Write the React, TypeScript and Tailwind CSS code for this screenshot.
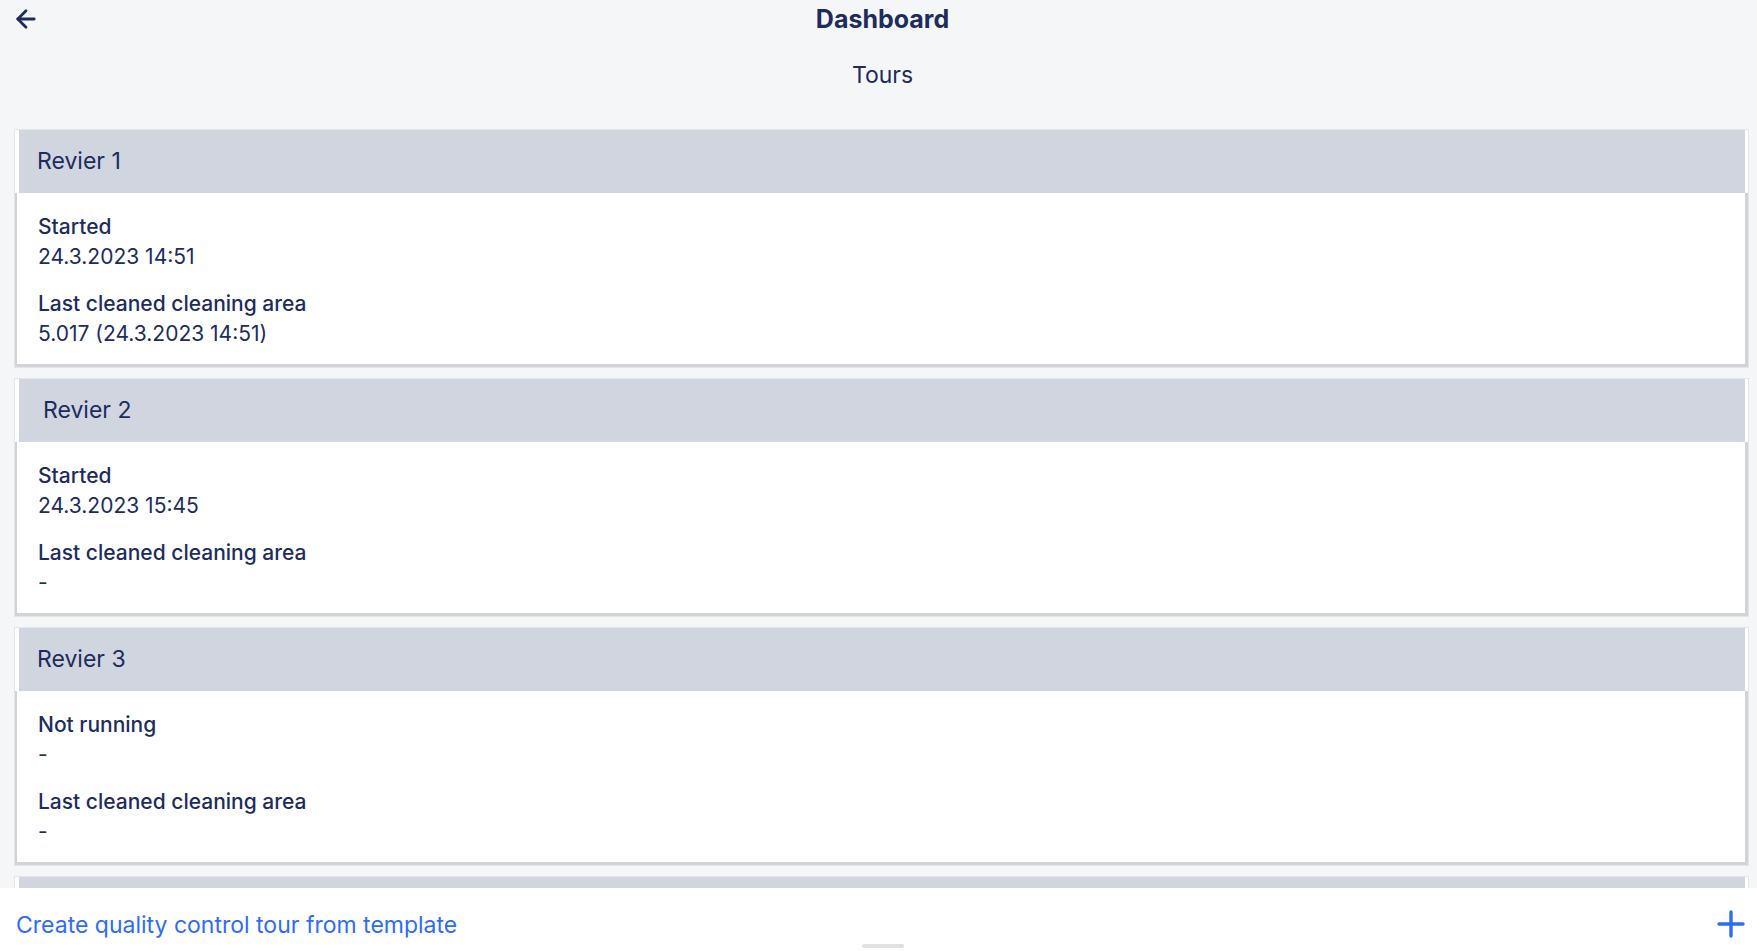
import { ArrowLeft } from "lucide-react";

type Tour = {
  name: string;
  indent?: boolean;
  status: string;
  statusValue: string;
  lastArea: string;
};

const tours: Tour[] = [
  {
    name: "Revier 1",
    status: "Started",
    statusValue: "24.3.2023 14:51",
    lastArea: "5.017 (24.3.2023 14:51)",
  },
  {
    name: "Revier 2",
    indent: true,
    status: "Started",
    statusValue: "24.3.2023 15:45",
    lastArea: "-",
  },
  {
    name: "Revier 3",
    status: "Not running",
    statusValue: "-",
    lastArea: "-",
  },
];

function TourCard({ tour }: { tour: Tour }) {
  return (
    <div className="shrink-0 border border-[#e3e5e9] bg-white">
      <div
        className={`ml-[4px] mr-[3px] flex h-[63px] items-center bg-[#d1d5e0] text-[23px] ${
          tour.indent ? "pl-[24px]" : "pl-[18px]"
        }`}
      >
        {tour.name}
      </div>
      <div className="border-l-[2px] border-r-[3px] border-b-[3px] border-[#d2d3d6] pl-[21px] pt-[19px] pb-[15px] text-[21px] leading-[30px]">
        <div className="font-medium">{tour.status}</div>
        <div>{tour.statusValue}</div>
        <div className="mt-[17px] font-medium">Last cleaned cleaning area</div>
        <div>{tour.lastArea}</div>
      </div>
    </div>
  );
}

export default function App() {
  return (
    <div
      className="flex h-[951px] flex-col overflow-hidden bg-[#f5f6f8] text-[#1d2c5e]"
      style={{ fontFamily: "Inter, 'Noto Sans', sans-serif" }}
    >
      {/* nav bar */}
      <div className="relative flex h-[40px] shrink-0 items-center justify-center pl-[8px]">
        <button className="absolute left-[12px] top-[5px] text-[#1d2c5e]">
          <ArrowLeft size={28} strokeWidth={2.4} />
        </button>
        <h1 className="text-[25px] font-bold">Dashboard</h1>
      </div>

      <div className="flex h-[70px] shrink-0 items-center justify-center pl-[8px] text-[23px]">
        Tours
      </div>

      {/* list */}
      <div className="flex min-h-0 flex-1 flex-col gap-[10px] overflow-hidden pl-[14px] pr-[8px] pt-[19px]">
        {tours.map((t) => (
          <TourCard key={t.name} tour={t} />
        ))}
        {/* next card, scrolled under the bottom bar */}
        <div className="shrink-0 border border-[#e3e5e9] bg-white">
          <div className="ml-[4px] mr-[3px] h-[63px] bg-[#d1d5e0]" />
        </div>
      </div>

      {/* bottom bar */}
      <div className="relative flex h-[63px] shrink-0 items-center justify-between bg-white pl-[16px] pr-[12px] pt-[12px]">
        <span className="text-[23px] text-[#2f6cf6]">
          Create quality control tour from template
        </span>
        <svg width="28" height="28" viewBox="0 0 28 28" className="-mt-[4px]">
          <path
            d="M14 2V26M2 14H26"
            stroke="#2f6cf6"
            strokeWidth="3.4"
            strokeLinecap="round"
          />
        </svg>
        <div className="absolute bottom-[3px] left-1/2 ml-[4px] h-[4px] w-[42px] -translate-x-1/2 rounded-full bg-[#e2e2e4]" />
      </div>
    </div>
  );
}
